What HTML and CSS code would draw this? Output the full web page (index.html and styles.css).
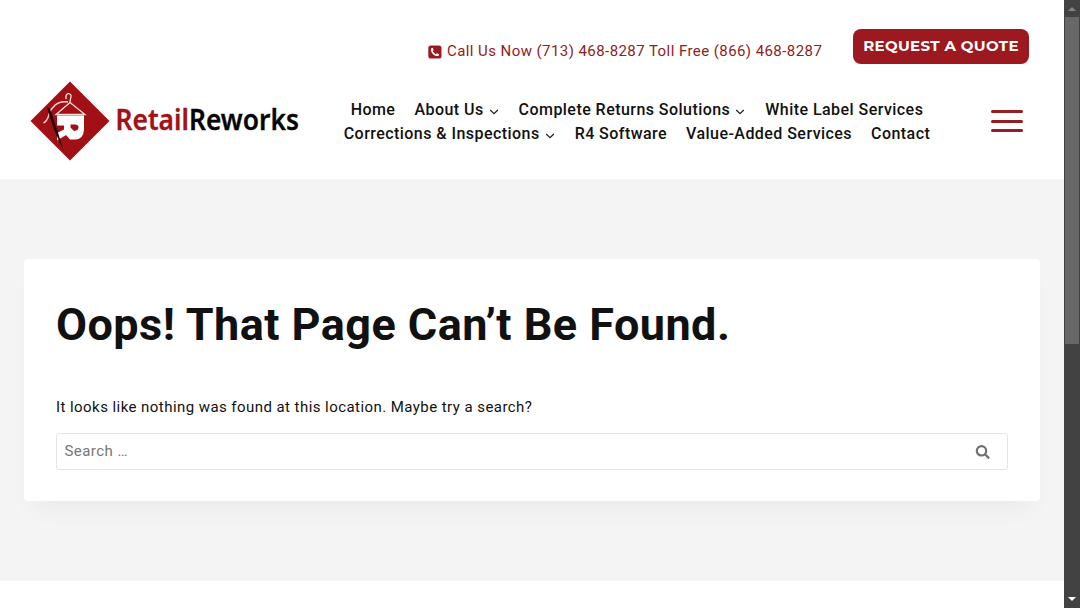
FILE: index.html
```html
<!DOCTYPE html>
<html lang="en">
<head>
<meta charset="utf-8">
<title>Page not found - Retail Reworks</title>
<link rel="stylesheet" href="styles.css">
</head>
<body>
<div class="page">
  <header class="header">
    <div class="top-row">
      <a class="phone">
        <svg class="phone-icon" viewBox="0 0 14 14"><rect x=".3" y=".5" width="13.2" height="13" rx="2.6" fill="#9c1a1f"/><path d="M3 3.400 4.600 2.800 5.700 5 4.700 6.100Q5.700 8.200 7.700 9.200L8.800 8.200 11 9.200 10.500 10.900C6.500 11.600 2.200 7.500 3 3.400Z" fill="#fff"/></svg>
        <span>Call Us Now (713) 468-8287 Toll Free (866) 468-8287</span>
      </a>
      <a class="quote">REQUEST A QUOTE</a>
    </div>
    <div class="main-row">
      <svg class="logo" viewBox="0 0 280 80">
        <path d="M40 .5 79.500 40 40 79.500.5 40Z" fill="#a11014"/>
        <path d="M13.500 42C20 39 17.500 31 23 26.500 27 21 33 20.500 38 21" fill="none" stroke="#f4d5d0" stroke-width="1.500"/>
        <path d="M36 18V15Q36.500 12.500 38.500 12.700 41.500 13 41 16 40 18 40 21.500L55 33.500H26L40 21.500" fill="none" stroke="#f9e3de" stroke-width="1.300"/>
        <path fill-rule="evenodd" d="M27 34.500H54V48.500Q53.500 57.500 46 58.500H40L36 54 27 59.500V52L34 48.500V44.500H27ZM40.500 43.500V46.500L44 50Q48.500 49.500 48.500 46.500 48.500 43.500 45 43.500Z" fill="#fff"/>
        <path d="M17 26.500 20 28 27.500 50 33.500 69.500 24 48.500Z" fill="#1a0809"/>
        <text x="85.500" y="49" textLength="183.500" lengthAdjust="spacingAndGlyphs" class="logo-text"><tspan class="logo-red">Retail</tspan>Reworks</text>
      </svg>
      <nav class="nav">
        <div class="nav-row">
          <a>Home</a>
          <a>About Us<svg class="chev" viewBox="0 0 10 6"><path d="M1.200 1 5 4.700 8.800 1"/></svg></a>
          <a>Complete Returns Solutions<svg class="chev" viewBox="0 0 10 6"><path d="M1.200 1 5 4.700 8.800 1"/></svg></a>
          <a>White Label Services</a>
        </div>
        <div class="nav-row">
          <a>Corrections &amp; Inspections<svg class="chev" viewBox="0 0 10 6"><path d="M1.200 1 5 4.700 8.800 1"/></svg></a>
          <a>R4 Software</a>
          <a>Value-Added Services</a>
          <a>Contact</a>
        </div>
      </nav>
      <div class="burger"><i></i><i></i><i></i></div>
    </div>
  </header>
  <main class="content">
    <section class="card">
      <h1 class="title">Oops! That Page Can’t Be Found.</h1>
      <p class="message">It looks like nothing was found at this location. Maybe try a search?</p>
      <form class="search">
        <input class="search-input" type="text" placeholder="Search …">
        <svg class="search-icon" viewBox="0 0 16 16"><circle cx="6.500" cy="6.800" r="4.700"/><path d="M10 10.300 14.100 14.400"/></svg>
      </form>
    </section>
  </main>
</div>
<div class="scrollbar">
  <svg class="arrow arrow-up" viewBox="0 0 16 17"><path d="M4 11H12L8 7Z"/></svg>
  <div class="thumb"></div>
  <svg class="arrow arrow-down" viewBox="0 0 16 17"><path d="M4 6H12L8 10Z"/></svg>
</div>
</body>
</html>
```
FILE: styles.css
```css
* { box-sizing: border-box; }
body {
  margin: 0;
  display: flex;
  height: 608px;
  overflow: hidden;
  background: #fff;
  color: #111;
  font-family: Roboto, sans-serif;
}
.page { width: 1064px; }
.header { height: 179px; background: #fff; }
.top-row {
  display: flex;
  justify-content: flex-end;
  align-items: flex-start;
  height: 81px;
  padding: 29px 35px 0 0;
}
.phone {
  display: flex;
  align-items: center;
  width: 425px;
  height: 43px;
  color: #8f1d22;
  font-size: 15px;
  letter-spacing: 0.43px;
  white-space: nowrap;
}
.phone-icon { width: 14px; height: 14px; margin: 2px 5px 0 0; }
.quote {
  width: 176px;
  height: 35px;
  border-radius: 8px;
  background: #9c1a1f;
  color: #fff;
  font: 700 15px/34px Montserrat, Inter, sans-serif;
  letter-spacing: 0.33px;
  text-align: center;
  white-space: nowrap;
}
.main-row { display: flex; align-items: flex-start; padding-left: 30px; }
.logo { width: 280px; height: 80px; flex: none; }
.logo-text {
  font: 600 28.500px "Noto Sans", sans-serif;
  fill: #050505;
  stroke: #050505;
  stroke-width: 0.3px;
}
.logo-red { fill: #a11219; stroke: #a11219; }
.nav { width: 654px; padding-top: 17px; }
.nav-row {
  display: flex;
  justify-content: center;
  gap: 19px;
  font-weight: 500;
  font-size: 16px;
  line-height: 24px;
  letter-spacing: 0.45px;
  white-space: nowrap;
}
.chev {
  width: 10px;
  height: 6px;
  margin: 0 1px 0 5px;
  fill: none;
  stroke: #222;
  stroke-width: 1.300;
}
.burger {
  display: flex;
  flex-direction: column;
  gap: 6.500px;
  width: 32px;
  margin: 29px 0 0 26.500px;
}
.burger i { height: 3px; border-radius: 2px; background: #951c20; }
.content { height: 402px; padding: 80px 24px 0; background: #f4f4f4; }
.card {
  height: 242px;
  padding: 32px;
  border-radius: 4px;
  background: #fff;
  box-shadow: 0 15px 25px -10px rgba(0, 0, 0, 0.05);
}
.title {
  margin: 0;
  font-size: 45px;
  line-height: 67px;
  letter-spacing: 0.45px;
  white-space: nowrap;
}
.message { margin: 36px 0 0; font-size: 15px; line-height: 26px; letter-spacing: 0.44px; }
.search {
  display: flex;
  align-items: center;
  height: 37px;
  margin-top: 13px;
  padding: 0 16px 0 7.500px;
  border: 1px solid #e1e5e6;
  border-radius: 3px;
}
.search-input {
  flex: 1;
  padding: 0 0 2px;
  border: 0;
  outline: 0;
  background: none;
  font: 15px Roboto, sans-serif;
  letter-spacing: 0.45px;
}
.search-input::placeholder { color: #777; }
.search-icon { width: 16px; height: 16px; fill: none; stroke: #707070; stroke-width: 2.200; }
.scrollbar {
  display: flex;
  flex-direction: column;
  width: 16px;
  height: 608px;
  background: #424242;
}
.arrow { width: 16px; height: 17px; flex: none; }
.arrow-up { fill: #858585; }
.arrow-down { margin-top: auto; fill: #fff; }
.thumb { height: 327px; margin: 0 1px; background: #686868; }
```
